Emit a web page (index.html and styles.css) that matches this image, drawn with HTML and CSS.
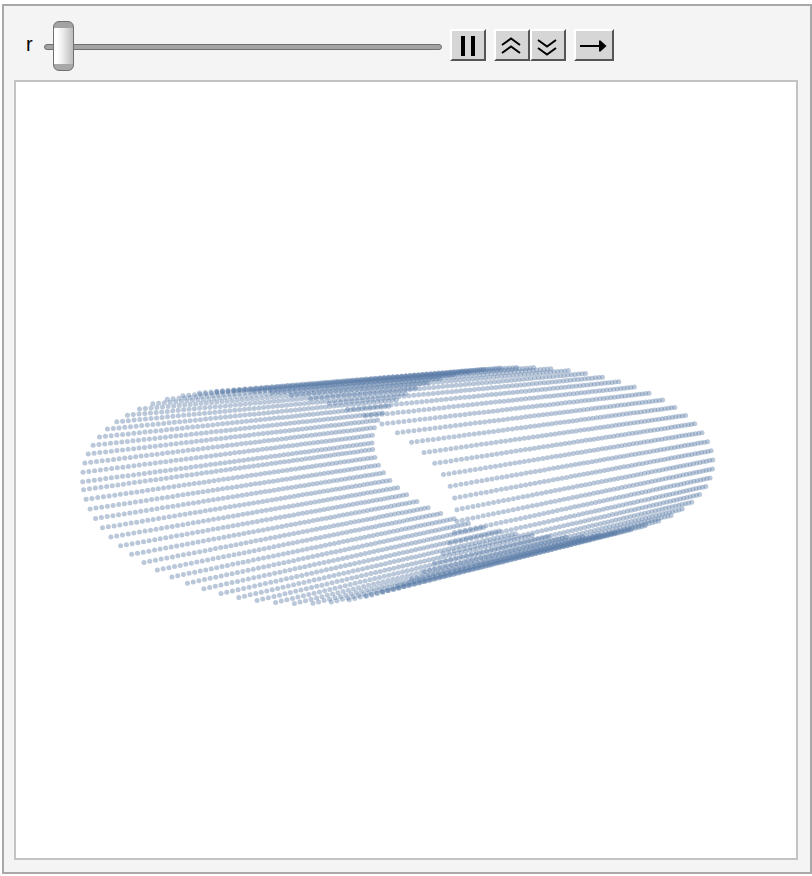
FILE: index.html
```
<!DOCTYPE html>
<html lang="en">
<head>
<meta charset="utf-8">
<title>Cylinder</title>
<link rel="stylesheet" href="styles.css">
</head>
<body>
<main class="panel">
  <div class="controls">
    <label class="name" for="r">r</label>
    <input class="slider" id="r" type="range" min="0" max="100" step="1" value="2">
    <div class="buttons">
      <button type="button" class="btn" aria-label="Pause"><svg width="32" height="28" viewBox="0 0 32 28"><path d="M9 5h4v20h-4zM19 5h4v20h-4z"/></svg></button>
      <div class="pair">
        <button type="button" class="btn" aria-label="Faster"><svg width="32" height="28" viewBox="0 0 32 28"><path class="line" d="M6 14L15 7.500L24 14M6 22L15 15.500L24 22"/></svg></button>
        <button type="button" class="btn" aria-label="Slower"><svg width="32" height="28" viewBox="0 0 32 28"><path class="line" d="M6 9L15 15.500L24 9M6 17L15 23.500L24 17"/></svg></button>
      </div>
      <button type="button" class="btn" aria-label="Direction"><svg width="36" height="28" viewBox="0 0 36 28"><path class="line" d="M4 15H25"/><path d="M23 9.500L24.500 9.500L30.500 15L24.500 20.500L23 20.500z"/></svg></button>
    </div>
  </div>
  <div class="view">
    <svg class="plot" id="plot" viewBox="0 0 780 776" role="img" aria-label="Points on a cylinder"></svg>
  </div>
</main>
<script src="plot.js"></script>
</body>
</html>
```
FILE: styles.css
```
* {
  box-sizing: border-box;
}

body {
  margin: 0;
  padding: 4px 0 2px 2px;
  background: #fff;
  font-family: "Liberation Sans", Arial, sans-serif;
}

.panel {
  padding: 0 12px 12px 10px;
  border: 2px solid #a8a8a8;
  background: #f4f4f4;
}

.controls {
  display: flex;
  align-items: center;
  height: 74px;
  padding: 4px 0 0 12px;
}

.name {
  width: 18px;
  padding-bottom: 2px;
  font-size: 20px;
  line-height: 20px;
}

.slider {
  -webkit-appearance: none;
  appearance: none;
  flex: 0 1 398px;
  min-width: 60px;
  height: 50px;
  margin: 4px 0 0;
  background: transparent;
}

.slider::-webkit-slider-runnable-track {
  height: 6px;
  border: 1px solid #707070;
  border-radius: 3px;
  background: #a3a3a3;
}

.slider::-webkit-slider-thumb {
  -webkit-appearance: none;
  width: 21px;
  height: 50px;
  margin-top: -24px;
  border: 1px solid #707070;
  border-radius: 6px;
  background:
    linear-gradient(#a3a3a3, #a3a3a3) top / 100% 6px no-repeat,
    linear-gradient(#a8a8a8, #a8a8a8) bottom / 100% 6px no-repeat,
    linear-gradient(90deg, #fff 15%, #ededed 45%, #bcbcbc);
}

.buttons {
  display: flex;
  gap: 8px;
  margin-left: 8px;
}

.pair {
  display: flex;
}

.btn {
  padding: 0;
  border: 2px solid;
  border-color: #fff #555 #555 #fff;
  background: #d6d6d6;
}

.btn svg {
  display: block;
}

.line {
  fill: none;
  stroke: #000;
  stroke-width: 2;
}

.view {
  border: 2px solid #c3c3c3;
  background: #fff;
}

.plot {
  display: block;
  width: 100%;
  fill: #5a7ca8;
  fill-opacity: 0.42;
}
```
FILE: plot.js
```
// Homogeneous coefficients of each rim: constant, cosine and sine terms.
const near = { x: [251.43, -160.55, -5.86], y: [496.48, 32.86, -109.51], w: [1, 0.0989, -0.0098] };
const far = { x: [529.2, -128.54, -8.1], y: [452.6, 24.67, -90.3], w: [1, 0.0773, -0.014] };
const depth = 1.28;
const steps = 62;
const origin = { x: 16, y: 82 };

const at = (k, c, s) => k[0] + k[1] * c + k[2] * s;
const plot = document.getElementById("plot");

for (let i = 0; i < 63; i++) {
  const c = Math.cos(i / 10);
  const s = Math.sin(i / 10);
  for (let j = 0; j <= steps; j++) {
    const t = j / steps;
    const mix = key => (1 - t) * at(near[key], c, s) + t * depth * at(far[key], c, s);
    const w = mix("w");
    const dot = document.createElementNS("http://www.w3.org/2000/svg", "circle");
    dot.setAttribute("cx", (mix("x") / w - origin.x).toFixed(2));
    dot.setAttribute("cy", (mix("y") / w - origin.y).toFixed(2));
    dot.setAttribute("r", 2.5);
    plot.appendChild(dot);
  }
}
```
